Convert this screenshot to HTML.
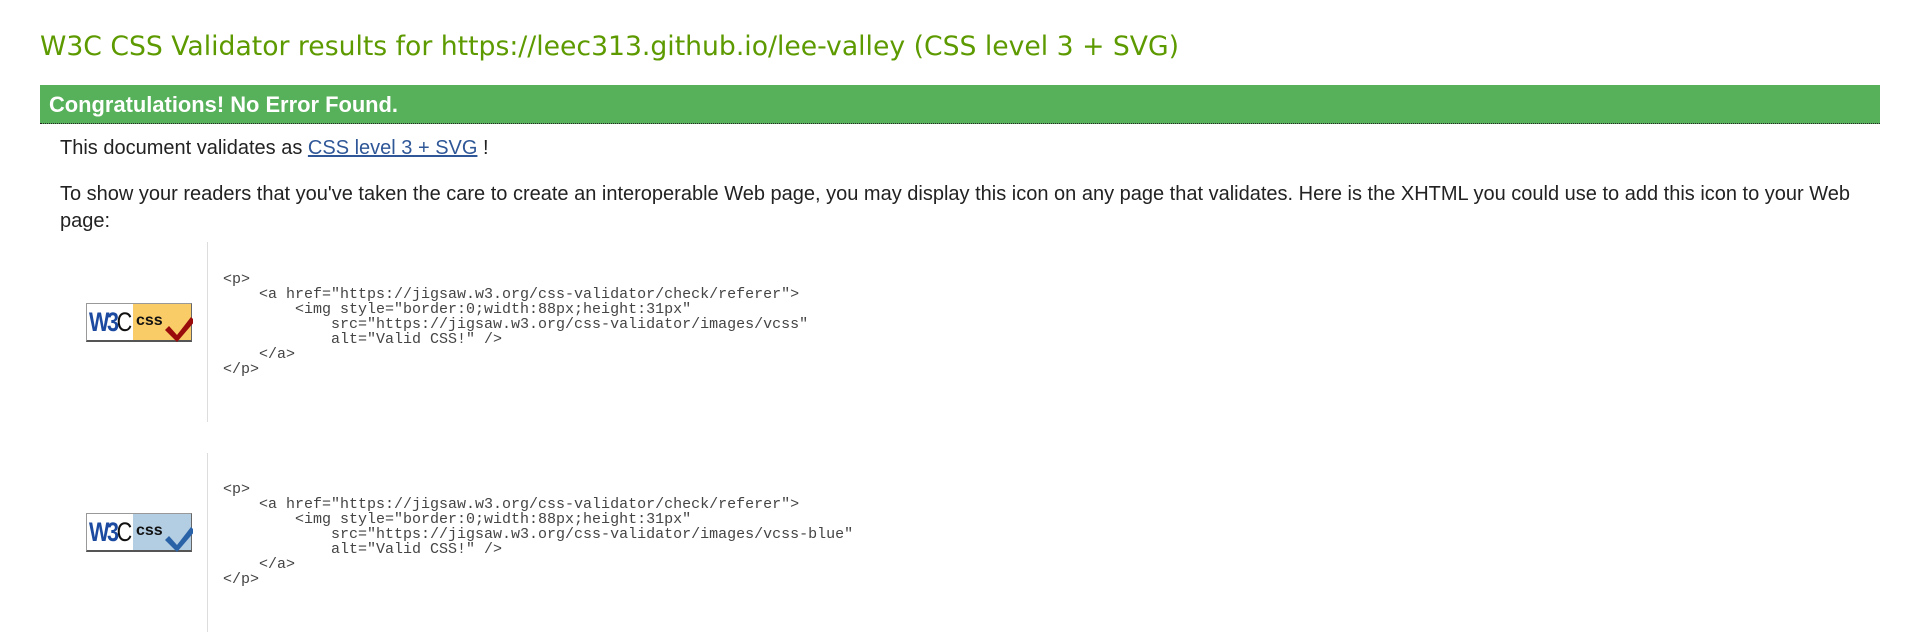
<!DOCTYPE html>
<html><head><meta charset="utf-8"><style>
body{margin:0;width:1920px;height:632px;background:#fff;position:relative;overflow:hidden;font-family:"Liberation Sans",sans-serif;color:#222}
.a{position:absolute;white-space:nowrap}
h1{position:absolute;left:40px;top:31px;margin:0;font:normal 26.65px "DejaVu Sans",sans-serif;color:#5d9a00;white-space:nowrap}
.bar{position:absolute;left:40px;top:85px;width:1840px;height:38px;background:#57b05a;border-bottom:1px dotted #222}
.bar span{position:absolute;left:9px;top:7px;font-weight:bold;font-size:21.9px;color:#fff}
p{margin:0}
.t{font-size:20px;color:#222}
a{color:#2f5797}
.vl{position:absolute;left:207px;width:1px;background:#ddd}
pre{position:absolute;left:223px;margin:0;font:15px/15px "Liberation Mono",monospace;color:#444}
.badge{position:absolute;left:86px;width:104px;height:36px;border:1px solid #999;border-right-color:#666;border-bottom:2px solid #555;background:#fff}
.badge .w{position:absolute;left:2px;top:2px;font:bold 27px/32px "Liberation Sans Narrow","Liberation Sans",sans-serif;color:#1c4aa0;letter-spacing:-3px;transform:scaleX(.8);transform-origin:left}
.badge .w b{color:#111;font-weight:normal}
.badge .c{position:absolute;left:46px;top:0;width:58px;height:36px}
.badge .c i{position:absolute;left:3px;top:8px;font:bold 16px "Liberation Sans",sans-serif;font-style:normal;color:#111}
</style></head><body>
<h1>W3C CSS Validator results for https://leec313.github.io/lee-valley (CSS level 3 + SVG)</h1>
<div class="bar"><span>Congratulations! No Error Found.</span></div>
<p class="a t" style="left:60px;top:137px">This document validates as <a href="#">CSS level 3 + SVG</a> !</p>
<p class="a t" style="left:60px;top:183px">To show your readers that you've taken the care to create an interoperable Web page, you may display this icon on any page that validates. Here is the XHTML you could use to add this icon to your Web</p>
<p class="a t" style="left:60px;top:210px">page:</p>

<div class="vl" style="top:242px;height:180px"></div>
<div class="badge" style="top:303px"><div class="w">W3<b>C</b></div><div class="c" style="background:#f9cc68"><i>css</i>
<svg width="60" height="40" style="position:absolute;left:0;top:0"><path d="M36 22 L44 31 L58 13 L62 17 L44 38 L32 26Z" fill="#9a0b0b"/></svg></div></div>
<pre style="top:272px">&lt;p&gt;
    &lt;a href="https://jigsaw.w3.org/css-validator/check/referer"&gt;
        &lt;img style="border:0;width:88px;height:31px"
            src="https://jigsaw.w3.org/css-validator/images/vcss"
            alt="Valid CSS!" /&gt;
    &lt;/a&gt;
&lt;/p&gt;</pre>

<div class="vl" style="top:453px;height:179px"></div>
<div class="badge" style="top:513px"><div class="w">W3<b>C</b></div><div class="c" style="background:#b3cde3"><i>css</i>
<svg width="60" height="40" style="position:absolute;left:0;top:0"><path d="M36 22 L44 31 L58 13 L62 17 L44 38 L32 26Z" fill="#2a62a8"/></svg></div></div>
<pre style="top:482px">&lt;p&gt;
    &lt;a href="https://jigsaw.w3.org/css-validator/check/referer"&gt;
        &lt;img style="border:0;width:88px;height:31px"
            src="https://jigsaw.w3.org/css-validator/images/vcss-blue"
            alt="Valid CSS!" /&gt;
    &lt;/a&gt;
&lt;/p&gt;</pre>
</body></html>
